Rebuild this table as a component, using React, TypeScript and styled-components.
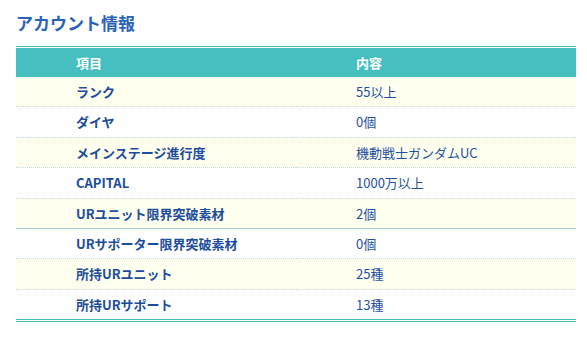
import styled, { createGlobalStyle } from 'styled-components';

const GlobalStyle = createGlobalStyle`
  body {
    margin: 0;
    background: #ffffff;
    font-family: "Noto Sans CJK JP", "Noto Sans", sans-serif;
  }
`;

const Page = styled.main`
  padding: 11px 0 0 16px;
`;

const Title = styled.h2`
  margin: 0 0 11px;
  font-size: 17px;
  line-height: 24px;
  font-weight: 700;
  color: #2a63b6;
`;

const Table = styled.table`
  width: 560px;
  border-collapse: collapse;
  border-top: 3px double #46bfc1;
  border-bottom: 3px double #46bfc1;
  font-size: 13px;
  line-height: 19px;
`;

const HeadCell = styled.th`
  width: 50%;
  padding: 4px 0 5px 60px;
  background: #46bfc1;
  color: #ffffff;
  font-weight: 700;
  text-align: left;
`;

const Row = styled.tr<{ $shaded: boolean; $solid?: boolean }>`
  background: ${({ $shaded }) => ($shaded ? '#fffff0' : '#ffffff')};
  border-bottom: ${({ $solid }) => ($solid ? '1px solid #a6d2d4' : '1px dotted #c6dadb')};

  &:last-child {
    border-bottom: none;
  }
`;

const Label = styled.td`
  padding: 5px 0 5.4px 60px;
  color: #1c4c9c;
  font-weight: 700;
`;

const Value = styled.td`
  padding: 5px 0 5.4px 60px;
  color: #1f50a2;
`;

const rows = [
  { label: 'ランク', value: '55以上' },
  { label: 'ダイヤ', value: '0個' },
  { label: 'メインステージ進行度', value: '機動戦士ガンダムUC' },
  { label: 'CAPITAL', value: '1000万以上' },
  { label: 'URユニット限界突破素材', value: '2個', solid: true },
  { label: 'URサポーター限界突破素材', value: '0個' },
  { label: '所持URユニット', value: '25種' },
  { label: '所持URサポート', value: '13種' },
];

export default function App() {
  return (
    <>
      <GlobalStyle />
      <Page>
        <Title>アカウント情報</Title>
        <Table>
          <thead>
            <tr>
              <HeadCell>項目</HeadCell>
              <HeadCell>内容</HeadCell>
            </tr>
          </thead>
          <tbody>
            {rows.map((row, i) => (
              <Row key={row.label} $shaded={i % 2 === 0} $solid={row.solid}>
                <Label>{row.label}</Label>
                <Value>{row.value}</Value>
              </Row>
            ))}
          </tbody>
        </Table>
      </Page>
    </>
  );
}
